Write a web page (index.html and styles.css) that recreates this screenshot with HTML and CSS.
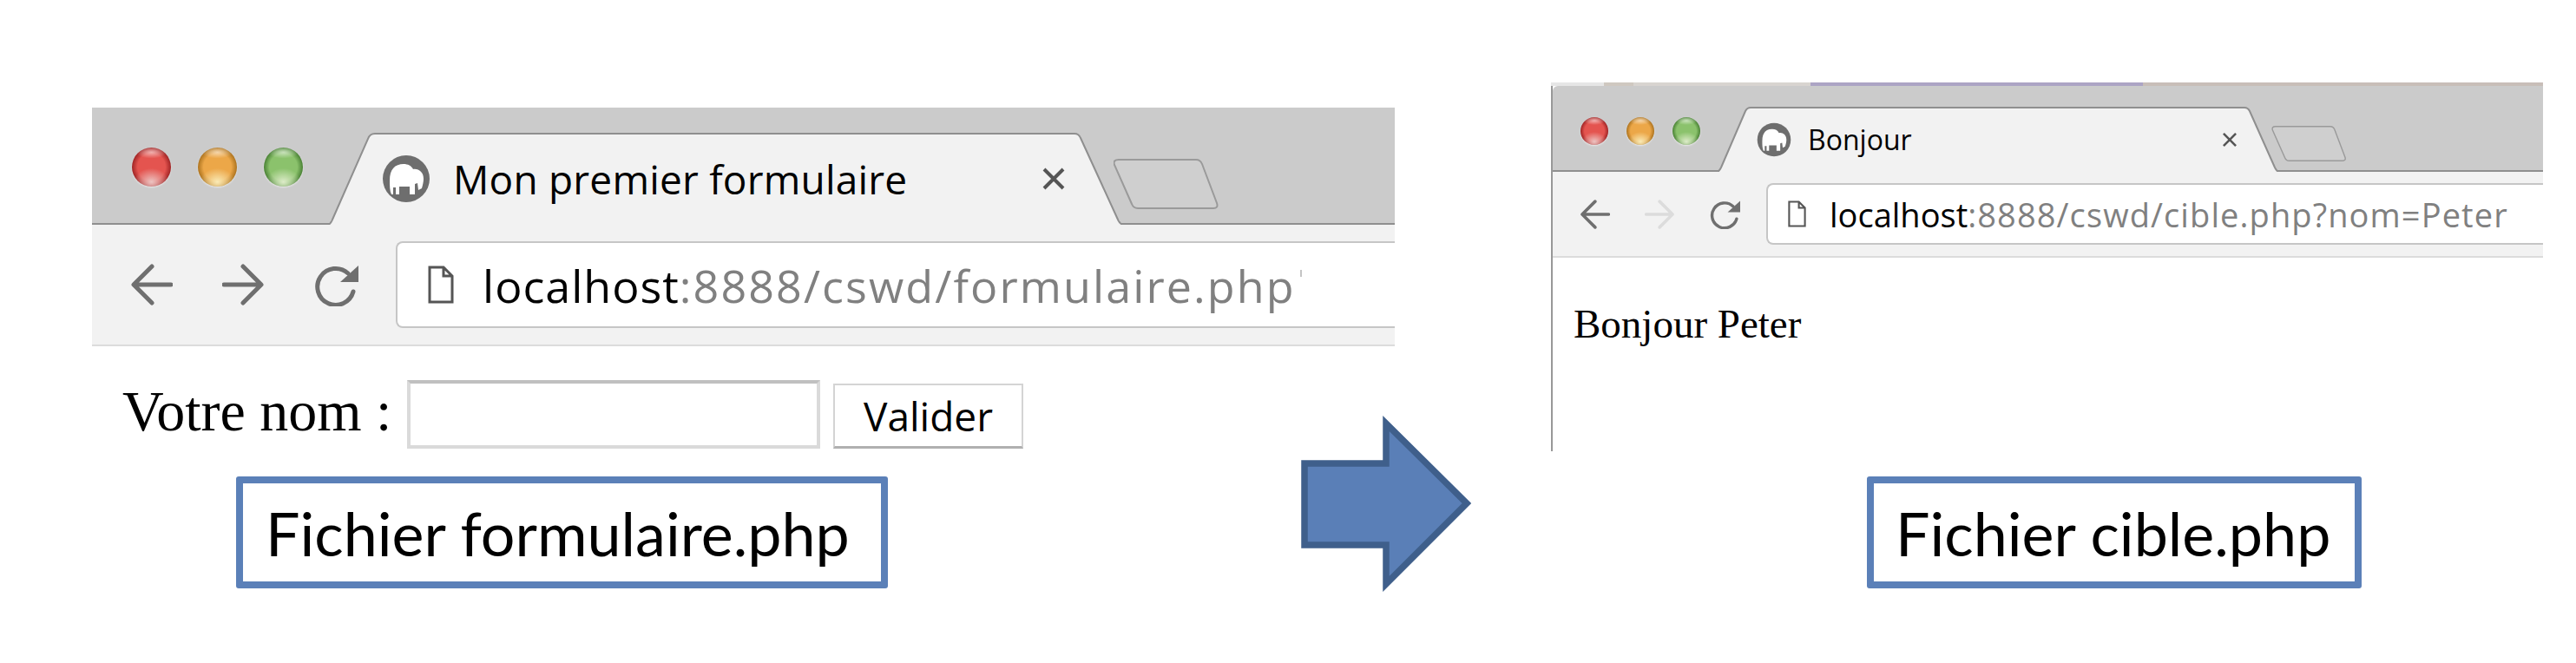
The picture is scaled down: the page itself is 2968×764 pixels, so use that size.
FILE: index.html
```html
<!DOCTYPE html>
<html lang="fr">
<head>
<meta charset="UTF-8">
<meta name="viewport" content="width=device-width, initial-scale=1.0">
<title>Formulaire PHP</title>
<link rel="stylesheet" href="styles.css">
</head>
<body>

<svg class="defs" width="0" height="0" aria-hidden="true">
  <symbol id="icon-back" viewBox="0 0 49 48">
    <path d="M47 24H5M25 3L4 24L25 45" fill="none" stroke="currentColor" stroke-width="5" stroke-linecap="round" stroke-linejoin="round"/>
  </symbol>
  <symbol id="icon-forward" viewBox="0 0 49 48">
    <path d="M2 24H44M24 3L45 24L24 45" fill="none" stroke="currentColor" stroke-width="5" stroke-linecap="round" stroke-linejoin="round"/>
  </symbol>
  <symbol id="icon-reload" viewBox="0 0 51 49">
    <path d="M39 11A21 21 0 1 0 45 32" fill="none" stroke="currentColor" stroke-width="5" stroke-linecap="round"/>
    <path d="M51 2V21H30Z" fill="currentColor"/>
  </symbol>
  <symbol id="icon-page" viewBox="0 0 30 44">
    <path d="M2 2H18L28 12V42H2ZM18 2V12H28" fill="#fff" stroke="#555" stroke-width="3"/>
  </symbol>
  <symbol id="icon-close" viewBox="0 0 28 28">
    <path d="M3 3L25 25M25 3L3 25" fill="none" stroke="#555" stroke-width="4"/>
  </symbol>
  <symbol id="icon-newtab" viewBox="0 0 121 58">
    <path d="M6 1H95Q100 1 102 6L119 51Q121 57 115 57H28Q23 57 21 52L1 7Q-1 1 6 1Z" fill="#cfcfcf" stroke="#9a9a9a" stroke-width="2"/>
  </symbol>
  <symbol id="icon-mamp" viewBox="0 0 56 56">
    <circle cx="28" cy="28" r="27" fill="#6e6e6e"/>
    <path d="M9 30C9 17 15 11 25 11C30 11 34 13 36 17C42 16 48 20 48 28C48 32 47 35 46 39L42 41L41 33L38 34V46H32V37H20V46H16V38H13V46H11C9 42 9 36 9 30Z" fill="#fff"/>
  </symbol>
</svg>

<main class="slide">

  <!-- capture de gauche -->
  <section class="shot shot-left">
    <div class="chrome">
      <div class="tabstrip">
        <div class="lights">
          <span class="light light-red"></span>
          <span class="light light-orange"></span>
          <span class="light light-green"></span>
        </div>
        <div class="tab">
          <svg class="tab-shape" viewBox="0 0 916 106" preserveAspectRatio="none">
            <path d="M0 106Q3 105 5 100L46 7Q48 1 54 1H860Q865 1 867 6L910 100Q912 105 916 106Z" fill="#f2f2f2"/>
            <path d="M0 106Q3 105 5 100L46 7Q48 1 54 1H860Q865 1 867 6L910 100Q912 105 916 106" fill="none" stroke="#8f8f8f" stroke-width="2"/>
          </svg>
          <svg class="favicon"><use href="#icon-mamp"/></svg>
          <span class="tab-title">Mon premier formulaire</span>
          <svg class="tab-close"><use href="#icon-close"/></svg>
        </div>
        <svg class="newtab"><use href="#icon-newtab"/></svg>
      </div>
      <div class="toolbar">
        <svg class="nav-icon nav-back"><use href="#icon-back"/></svg>
        <svg class="nav-icon nav-forward"><use href="#icon-forward"/></svg>
        <svg class="nav-icon nav-reload"><use href="#icon-reload"/></svg>
        <div class="address">
          <svg class="page-icon"><use href="#icon-page"/></svg>
          <span class="url"><b>localhost</b>:8888/cswd/formulaire.php<i class="url-cut"></i></span>
        </div>
      </div>
    </div>
    <form class="page-form">
      <label class="form-label" for="nom">Votre nom :</label>
      <input class="form-input" id="nom" type="text">
      <button class="form-button" type="button">Valider</button>
    </form>
    <div class="file-label">Fichier formulaire.php</div>
  </section>

  <!-- flèche entre les deux captures -->
  <svg class="arrow" viewBox="0 0 196 205">
    <path d="M4 56H98V10L191 102L98 195V150H4Z" fill="#5a7fb7" stroke="#3f5f8b" stroke-width="7.5"/>
  </svg>

  <!-- capture de droite -->
  <section class="shot shot-right">
    <div class="topline"></div>
    <div class="window">
      <div class="chrome">
        <div class="tabstrip">
          <div class="lights">
            <span class="light light-red"></span>
            <span class="light light-orange"></span>
            <span class="light light-green"></span>
          </div>
          <div class="tab">
            <svg class="tab-shape" viewBox="0 0 646 75" preserveAspectRatio="none">
              <path d="M0 75Q2 74 4 70L32 5Q34 1 38 1H607Q611 1 613 5L642 70Q644 74 646 75Z" fill="#f2f2f2"/>
              <path d="M0 75Q2 74 4 70L32 5Q34 1 38 1H607Q611 1 613 5L642 70Q644 74 646 75" fill="none" stroke="#8f8f8f" stroke-width="2"/>
            </svg>
            <svg class="favicon"><use href="#icon-mamp"/></svg>
            <span class="tab-title">Bonjour</span>
            <svg class="tab-close"><use href="#icon-close"/></svg>
          </div>
          <svg class="newtab"><use href="#icon-newtab"/></svg>
        </div>
        <div class="toolbar">
          <svg class="nav-icon nav-back"><use href="#icon-back"/></svg>
          <svg class="nav-icon nav-forward nav-disabled"><use href="#icon-forward"/></svg>
          <svg class="nav-icon nav-reload"><use href="#icon-reload"/></svg>
          <div class="address">
            <svg class="page-icon"><use href="#icon-page"/></svg>
            <span class="url"><b>localhost</b>:8888/cswd/cible.php?nom=Peter</span>
          </div>
        </div>
      </div>
      <p class="page-text">Bonjour Peter</p>
    </div>
    <div class="file-label">Fichier cible.php</div>
  </section>

</main>

</body>
</html>
```

FILE: styles.css
```css
* {
  box-sizing: border-box;
}
body {
  margin: 0;
  background-color: #fff;
  overflow: hidden;
}
.defs {
  position: absolute;
}
.slide {
  display: grid;
  grid-template-columns: 106px 1393px 108px 88px 92px 1143px 38px;
  width: 2968px;
  height: 764px;
  align-items: start;
}
.shot-left {
  grid-row: 1;
  grid-column: 2 / 4;
  margin-top: 124px;
}
.shot-right {
  grid-row: 1;
  grid-column: 6;
  margin-top: 95px;
}
.arrow {
  grid-row: 1;
  grid-column: 3 / 5;
  width: 196px;
  height: 205px;
  margin-top: 478px;
}

/* barre du navigateur */
.tabstrip {
  display: flex;
  align-items: flex-start;
  background-color: #cbcbcb;
  border-bottom: 2px solid #8f8f8f;
}
.lights {
  display: flex;
}
.light {
  display: block;
  border-radius: 50%;
  box-shadow: 0 1px 2px rgba(255, 255, 255, 0.6);
}
.light-red {
  background:
    radial-gradient(ellipse 40% 16% at 50% 12%, rgba(255, 255, 255, 0.55), transparent),
    radial-gradient(ellipse 45% 35% at 50% 88%, #ecc4c2, transparent),
    radial-gradient(circle at 50% 50%, #e4544f 50%, #a82a2a 68%, #6e1a1a);
}
.light-orange {
  background:
    radial-gradient(ellipse 40% 16% at 50% 12%, rgba(255, 255, 255, 0.55), transparent),
    radial-gradient(ellipse 45% 35% at 50% 88%, #f9eab6, transparent),
    radial-gradient(circle at 50% 50%, #eca748 50%, #b57a24 68%, #7c5413);
}
.light-green {
  background:
    radial-gradient(ellipse 40% 16% at 50% 12%, rgba(255, 255, 255, 0.55), transparent),
    radial-gradient(ellipse 45% 35% at 50% 88%, #dcebc8, transparent),
    radial-gradient(circle at 50% 50%, #8bc26c 50%, #528a3c 68%, #2f5a22);
}
.tab {
  position: relative;
  display: flex;
  align-items: center;
  flex: none;
}
.tab-shape {
  position: absolute;
  top: 0;
  left: 0;
  width: 100%;
  height: 100%;
}
.favicon,
.tab-title,
.tab-close {
  position: relative;
  flex: none;
}
.tab-title {
  flex: 1;
  font-family: "Open Sans", "DejaVu Sans", sans-serif;
  font-weight: 500;
  color: #000;
}
.toolbar {
  display: flex;
  align-items: center;
  background-color: #f2f2f2;
  border-bottom: 2px solid #dcdcdc;
}
.nav-icon {
  flex: none;
  color: #6f6f6f;
}
.nav-disabled {
  color: #dcdcdc;
}
.address {
  display: flex;
  align-items: center;
  flex: 1;
  background-color: #fff;
  border: 2px solid #c6c6c6;
  border-right: none;
  border-radius: 8px 0 0 8px;
}
.page-icon {
  flex: none;
}
.url {
  font-family: "Open Sans", "DejaVu Sans", sans-serif;
  color: #808080;
  white-space: nowrap;
}
.url b {
  font-weight: 500;
  color: #000;
}
.url-cut {
  display: inline-block;
  width: 2px;
  height: 8px;
  margin-left: 5px;
  vertical-align: 30px;
  background-color: #c4c4c4;
}
.file-label {
  display: flex;
  align-items: center;
  height: 129px;
  background-color: #fff;
  border: 8px solid #5b80b8;
  border-radius: 3px;
  font-family: Lato, "Open Sans", sans-serif;
  font-size: 70px;
  color: #000;
  white-space: nowrap;
}

/* capture de gauche */
.shot-left .lights {
  gap: 31px;
  padding: 46px 0 0 46px;
}
.shot-left .light {
  width: 45px;
  height: 45px;
}
.shot-left .tabstrip {
  height: 135px;
}
.shot-left .tab {
  width: 916px;
  height: 106px;
  margin: 29px 0 0 29px;
  padding: 0 66px 0 62px;
}
.shot-left .favicon {
  width: 56px;
  height: 56px;
  margin-right: 26px;
}
.shot-left .tab-title {
  font-size: 46px;
  letter-spacing: 0.2px;
}
.shot-left .tab-close {
  width: 28px;
  height: 28px;
}
.shot-left .newtab {
  flex: none;
  width: 121px;
  height: 58px;
  margin: 59px 0 0 -11px;
}
.shot-left .toolbar {
  height: 140px;
  padding-left: 44px;
}
.shot-left .nav-icon {
  width: 49px;
  height: 48px;
  margin-right: 57px;
}
.shot-left .nav-reload {
  width: 51px;
  height: 49px;
  margin-right: 43px;
}
.shot-left .address {
  height: 100px;
  padding-left: 35px;
}
.shot-left .page-icon {
  width: 30px;
  height: 44px;
  margin-right: 33px;
}
.shot-left .url {
  font-size: 52px;
  letter-spacing: 2.1px;
}
.shot-left .url b {
  letter-spacing: 1px;
}
.page-form {
  display: flex;
  align-items: flex-end;
  height: 150px;
  padding: 39px 0 32px 35px;
}
.form-label {
  width: 328px;
  margin-bottom: 8px;
  font-family: "Liberation Serif", serif;
  font-size: 66px;
  line-height: 71px;
  color: #000;
  white-space: nowrap;
}
.form-input {
  width: 476px;
  height: 79px;
  background-color: #fff;
  border: 4px solid #dadada;
  border-top-color: #c0c0c0;
  outline: none;
}
.form-button {
  width: 219px;
  height: 75px;
  margin-left: 15px;
  padding: 0;
  background-color: #fff;
  border: 2px solid #d4d4d4;
  border-bottom: 3px solid #b0b0b0;
  font-family: "Open Sans", sans-serif;
  font-size: 46px;
  color: #000;
}
.shot-left .file-label {
  width: 751px;
  margin-left: 166px;
  padding-left: 26px;
}

/* capture de droite */
.topline {
  height: 4px;
  background: linear-gradient(to right, #e6e6e6 0, #e6e6e6 61px, #cfc8c0 61px, #cfc8c0 95px, #d8d4d0 95px, #d8d4d0 299px, #aca4c4 299px, #aca4c4 682px, #c8beb8 682px, #c8beb8 100%);
}
.window {
  height: 421px;
  border-left: 2px solid #989898;
}
.shot-right .tabstrip {
  height: 99px;
  border-top-left-radius: 6px;
}
.shot-right .lights {
  gap: 21px;
  padding: 36px 0 0 32px;
}
.shot-right .light {
  width: 32px;
  height: 32px;
}
.shot-right .tab {
  width: 646px;
  height: 75px;
  margin: 24px 0 0 20px;
  padding: 0 47px 0 45px;
}
.shot-right .favicon {
  width: 40px;
  height: 40px;
  margin-right: 19px;
}
.shot-right .tab-title {
  font-size: 32px;
}
.shot-right .tab-close {
  width: 18px;
  height: 18px;
}
.shot-right .newtab {
  flex: none;
  width: 87px;
  height: 41px;
  margin: 46px 0 0 -8px;
}
.shot-right .toolbar {
  height: 99px;
  padding-left: 31px;
}
.shot-right .nav-icon {
  width: 35px;
  height: 34px;
  margin-right: 40px;
}
.shot-right .nav-reload {
  margin-right: 30px;
}
.shot-right .address {
  height: 71px;
  padding-left: 23px;
}
.shot-right .page-icon {
  width: 21px;
  height: 31px;
  margin-right: 27px;
}
.shot-right .url {
  font-size: 38px;
  letter-spacing: 1.1px;
}
.shot-right .url b {
  letter-spacing: 0;
}
.page-text {
  margin: 49px 0 0 24px;
  font-family: "Liberation Serif", serif;
  font-size: 47px;
  line-height: 54px;
  color: #000;
}
.shot-right .file-label {
  width: 570px;
  margin: 29px 0 0 364px;
  padding-left: 25px;
}
```
